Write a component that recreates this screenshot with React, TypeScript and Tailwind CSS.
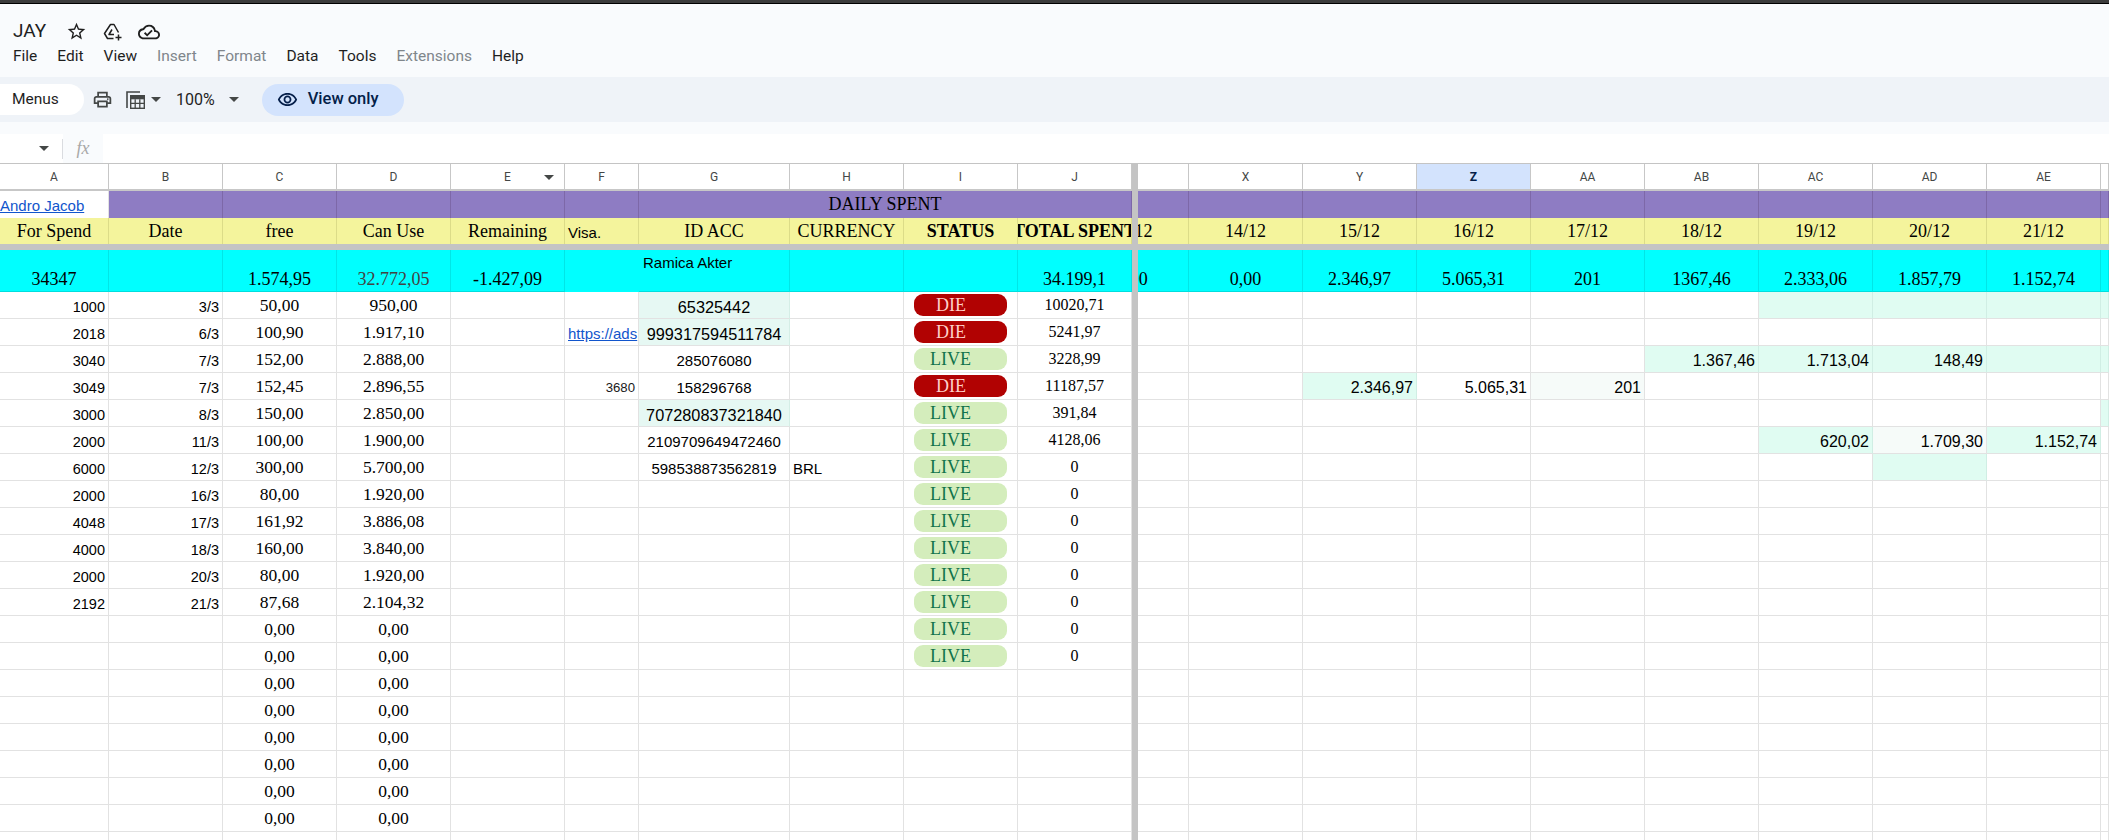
import { MdOutlineCloudDone, MdOutlinePrint, MdOutlineRemoveRedEye, MdOutlineStarBorder } from "react-icons/md"

const GRID =
  "grid grid-cols-[109px_114px_114px_114px_114px_74px_151px_114px_114px_114px_6px_51px_114px_114px_114px_114px_114px_114px_114px_114px_8px]"

const SERIF = "font-['Liberation_Serif',serif]"
const ARIAL = "font-['Liberation_Sans',sans-serif]"

const LEFT_HEADERS = ["A", "B", "C", "D", "E", "F", "G", "H", "I", "J"]
const RIGHT_HEADERS = ["X", "Y", "Z", "AA", "AB", "AC", "AD", "AE", "AF"]
const DATES = ["14/12", "15/12", "16/12", "17/12", "18/12", "19/12", "20/12", "21/12", ""]
const TOTALS = ["0,00", "2.346,97", "5.065,31", "201", "1367,46", "2.333,06", "1.857,79", "1.152,74", ""]

const MENU = [
  { label: "File" },
  { label: "Edit" },
  { label: "View" },
  { label: "Insert", off: true },
  { label: "Format", off: true },
  { label: "Data" },
  { label: "Tools" },
  { label: "Extensions", off: true },
  { label: "Help" },
]

type Row = {
  a?: string
  b?: string
  c?: string
  d?: string
  f?: string
  link?: boolean
  g?: string
  gTint?: boolean
  h?: string
  status?: "DIE" | "LIVE"
  j?: string
  // cells right of the frozen bar, keyed by column index from X
  right?: Record<number, { v?: string; soft?: boolean }>
}

const ROWS: Row[] = [
  { a: "1000", b: "3/3", c: "50,00", d: "950,00", g: "65325442", gTint: true, status: "DIE", j: "10020,71", right: { 5: {}, 6: {}, 7: {}, 8: {} } },
  { a: "2018", b: "6/3", c: "100,90", d: "1.917,10", f: "https://ads", link: true, g: "999317594511784", gTint: true, status: "DIE", j: "5241,97" },
  { a: "3040", b: "7/3", c: "152,00", d: "2.888,00", g: "285076080", status: "LIVE", j: "3228,99", right: { 4: { v: "1.367,46" }, 5: { v: "1.713,04" }, 6: { v: "148,49" }, 7: {}, 8: {} } },
  { a: "3049", b: "7/3", c: "152,45", d: "2.896,55", f: "3680", g: "158296768", status: "DIE", j: "11187,57", right: { 1: { v: "2.346,97" } } },
  { a: "3000", b: "8/3", c: "150,00", d: "2.850,00", g: "707280837321840", gTint: true, status: "LIVE", j: "391,84", right: { 8: {} } },
  { a: "2000", b: "11/3", c: "100,00", d: "1.900,00", g: "2109709649472460", status: "LIVE", j: "4128,06", right: { 5: { v: "620,02" }, 6: { v: "1.709,30", soft: true }, 7: { v: "1.152,74" } } },
  { a: "6000", b: "12/3", c: "300,00", d: "5.700,00", g: "598538873562819", h: "BRL", status: "LIVE", j: "0", right: { 6: {} } },
  { a: "2000", b: "16/3", c: "80,00", d: "1.920,00", status: "LIVE", j: "0" },
  { a: "4048", b: "17/3", c: "161,92", d: "3.886,08", status: "LIVE", j: "0" },
  { a: "4000", b: "18/3", c: "160,00", d: "3.840,00", status: "LIVE", j: "0" },
  { a: "2000", b: "20/3", c: "80,00", d: "1.920,00", status: "LIVE", j: "0" },
  { a: "2192", b: "21/3", c: "87,68", d: "2.104,32", status: "LIVE", j: "0" },
  { c: "0,00", d: "0,00", status: "LIVE", j: "0" },
  { c: "0,00", d: "0,00", status: "LIVE", j: "0" },
  { c: "0,00", d: "0,00" },
  { c: "0,00", d: "0,00" },
  { c: "0,00", d: "0,00" },
  { c: "0,00", d: "0,00" },
  { c: "0,00", d: "0,00" },
  { c: "0,00", d: "0,00" },
  { c: "0,00", d: "0,00" },
]

// row 4 has two more cells with their own fills
const ROW_3049_EXTRA: Record<number, string> = { 2: "5.065,31", 3: "201" }

const CYAN = "border-r-[#00e6e6] border-b border-b-[#00dede] bg-[#00ffff]"
const YELLOW = "border-[#dcdc88] bg-[#f4f49c]"

function Caret({ className = "" }: { className?: string }) {
  return (
    <svg width="10" height="5" viewBox="0 0 10 5" className={className}>
      <path d="M0 0h10L5 5z" fill="#444746" />
    </svg>
  )
}

function CalcIcon() {
  return (
    <svg width="19" height="18" viewBox="0 0 19 18" fill="none">
      <path d="M1 17V1h13" stroke="#444746" strokeWidth="1.6" />
      <rect x="4.7" y="4.7" width="13.6" height="12.6" stroke="#444746" strokeWidth="1.4" />
      <rect x="4.7" y="4.7" width="13.6" height="3.6" fill="#444746" />
      <path d="M4.7 12.4h13.6M9.2 8.3v9M13.8 8.3v9" stroke="#444746" strokeWidth="1.3" />
    </svg>
  )
}

function DriveAddIcon() {
  return (
    <svg width="20" height="18" viewBox="0 0 20 18" fill="none" stroke="#1f1f1f" strokeWidth="1.5" strokeLinejoin="round">
      <path d="M15.5 9.5L11 1.5H7.5L1.5 10.5l3 5h6" />
      <path d="M9 6.5L6 11.5h5" />
      <path d="M15.5 11.5v6M12.5 14.5h6" />
    </svg>
  )
}

function Cell({ className = "", children }: { className?: string; children?: React.ReactNode }) {
  return (
    <div className={`flex min-w-0 overflow-hidden whitespace-nowrap border-r ${className}`}>{children}</div>
  )
}

function ScrolledOut({ className = "", inner = "", text }: { className?: string; inner?: string; text: string }) {
  // column W is scrolled partly behind the frozen bar
  return (
    <div className={`flex overflow-hidden border-r ${className}`}>
      <div className={`ml-[-63px] flex w-[114px] shrink-0 justify-center ${inner}`}>{text}</div>
    </div>
  )
}

function Pill({ status }: { status: "DIE" | "LIVE" }) {
  const die = status === "DIE"
  return (
    <div
      className={`mx-auto mt-[2px] flex h-[22px] w-[93px] items-center rounded-[9px] text-[18px] ${SERIF} ${
        die ? "bg-[#b10202] pl-[22px] text-[#ffcfc9]" : "bg-[#d4edbc] pl-[16px] text-[#11734b]"
      }`}
    >
      {status}
    </div>
  )
}

export default function App() {
  const bar = <div className="bg-[#c4c4c4]" />

  return (
    <div className={`h-[840px] w-[2109px] overflow-hidden bg-white ${ARIAL}`}>
      <div className="h-[4px] bg-[#3c3c3c]">
        <div className="h-[3px]" />
        <div className="h-[1px] bg-black" />
      </div>

      {/* title + menus */}
      <header className="h-[73px] bg-[#f9fbfd] pl-[13px] font-['Roboto',sans-serif] text-[#1f1f1f]">
        <div className="flex h-[43px] items-center pt-[12px]">
          <span className="w-[53px] text-[19px]">JAY</span>
          <MdOutlineStarBorder className="size-[21px]" color="#1f1f1f" />
          <div className="ml-[16px]">
            <DriveAddIcon />
          </div>
          <MdOutlineCloudDone className="ml-[15px] size-[22px]" color="#1f1f1f" />
        </div>
        <nav className="flex h-[20px] items-center gap-[20px] text-[15.5px]">
          {MENU.map((item) => (
            <span key={item.label} className={item.off ? "text-[#80868b]" : ""}>
              {item.label}
            </span>
          ))}
        </nav>
      </header>

      {/* toolbar */}
      <div className="flex h-[45px] items-center bg-[#eff3f8] font-['Roboto',sans-serif] text-[#1f1f1f]">
        <div className="flex h-[31px] w-[84px] items-center rounded-r-full bg-white pl-[12px] text-[15.5px]">Menus</div>
        <MdOutlinePrint className="ml-[8px] size-[21px]" color="#444746" />
        <div className="ml-[13px]">
          <CalcIcon />
        </div>
        <Caret className="ml-[6px]" />
        <span className="ml-[15px] text-[16px]">100%</span>
        <Caret className="ml-[14px]" />
        <div className="ml-[23px] flex h-[32px] w-[142px] items-center rounded-full bg-[#d3e3fd] pl-[15px] text-[16.5px] font-medium text-[#041e49]">
          <MdOutlineRemoveRedEye className="size-[21px]" />
          <span className="ml-[10px]">View only</span>
        </div>
      </div>

      <div className="h-[12px] bg-[#f9fbfd]" />

      {/* formula bar */}
      <div className="flex h-[29px] items-center bg-white">
        <div className="flex w-[62px] items-center">
          <Caret className="ml-[39px]" />
        </div>
        <div className="h-[20px] w-px bg-[#dadce0]" />
        <div className={`flex h-full w-[40px] items-center justify-center bg-[#f9fbfd] text-[18px] italic text-[#a8a8a8] ${SERIF}`}>
          fx
        </div>
      </div>

      {/* column letters */}
      <div className={`${GRID} h-[28px] border-t border-[#c4c4c4] text-[12px] text-[#444746] font-['Roboto',sans-serif]`}>
        {LEFT_HEADERS.map((h) => (
          <div key={h} className="relative flex items-center justify-center border-r border-b-[2px] border-[#c7c7c7]">
            {h}
            {h === "E" && <Caret className="absolute right-[10px] top-[11px]" />}
          </div>
        ))}
        {bar}
        <ScrolledOut className="border-b-[2px] border-[#c7c7c7]" inner="items-center" text="W" />
        {RIGHT_HEADERS.map((h) => (
          <div
            key={h}
            className={`flex items-center justify-center overflow-hidden border-r border-b-[2px] border-[#c7c7c7] ${
              h === "Z" ? "bg-[#d3e3fd] font-bold text-[#041e49]" : ""
            }`}
          >
            {h === "AF" ? "" : h}
          </div>
        ))}
      </div>

      {/* frozen header rows */}
      <div className={`${GRID} h-[27px] text-[18px] text-black ${SERIF}`}>
        <Cell className={`items-end border-b border-[#e2e2e2] pb-[1px] text-[15px] text-[#1155cc] underline ${ARIAL}`}>
          Andro Jacob
        </Cell>
        {[0, 1, 2, 3, 4].map((i) => (
          <div key={i} className="border-r border-b border-[#7d68a8] bg-[#8e7cc3]" />
        ))}
        <div className="col-span-4 flex items-center justify-center border-r border-b border-[#7d68a8] bg-[#8e7cc3]">
          DAILY SPENT
        </div>
        {bar}
        {Array.from({ length: 10 }).map((_, i) => (
          <div key={i} className="border-r border-b border-[#7d68a8] bg-[#8e7cc3]" />
        ))}
      </div>

      <div className={`${GRID} h-[26px] text-[18px] text-black ${SERIF}`}>
        {["For Spend", "Date", "free", "Can Use", "Remaining"].map((t) => (
          <Cell key={t} className={`items-center justify-center ${YELLOW}`}>
            {t}
          </Cell>
        ))}
        <Cell className={`items-end pb-[2px] pl-[3px] text-[15px] leading-[18px] ${YELLOW} ${ARIAL}`}>Visa.</Cell>
        <Cell className={`items-center justify-center ${YELLOW}`}>ID ACC</Cell>
        <Cell className={`items-center justify-center ${YELLOW}`}>CURRENCY</Cell>
        <Cell className={`items-center justify-center font-bold ${YELLOW}`}>STATUS</Cell>
        <Cell className={`items-center justify-center font-bold ${YELLOW}`}>TOTAL SPENT</Cell>
        {bar}
        <ScrolledOut className={YELLOW} inner="items-center" text="13/12" />
        {DATES.map((t, i) => (
          <Cell key={i} className={`items-center justify-center ${YELLOW}`}>
            {t}
          </Cell>
        ))}
      </div>

      <div className="h-[6px] bg-[#c4c4c4]" />

      <div className={`${GRID} h-[42px] text-[18px] leading-[20px] text-black ${SERIF}`}>
        <Cell className={`items-end justify-center pb-[2px] ${CYAN}`}>34347</Cell>
        <Cell className={CYAN} />
        <Cell className={`items-end justify-center pb-[2px] ${CYAN}`}>1.574,95</Cell>
        <Cell className={`items-end justify-center pb-[2px] text-[#434343] ${CYAN}`}>32.772,05</Cell>
        <Cell className={`items-end justify-center pb-[2px] ${CYAN}`}>-1.427,09</Cell>
        <Cell className="border-r-[#00ffff] bg-[#00ffff]" />
        <Cell className={`items-start pl-[4px] pt-[4px] text-[15px] leading-[18px] ${CYAN} ${ARIAL}`}>Ramica Akter</Cell>
        <Cell className={CYAN} />
        <Cell className={CYAN} />
        <Cell className={`items-end justify-center pb-[2px] ${CYAN}`}>34.199,1</Cell>
        {bar}
        <ScrolledOut className={CYAN} inner="items-end pb-[2px]" text="0,00" />
        {TOTALS.map((t, i) => (
          <Cell key={i} className={`items-end justify-center pb-[2px] ${CYAN}`}>
            {t}
          </Cell>
        ))}
      </div>

      {/* body */}
      {ROWS.map((row, r) => (
        <div key={r} className={`${GRID} h-[27px] leading-[18px] text-black`}>
          <Cell className={`items-end justify-end border-[#e2e2e2] border-b pb-[2px] pr-[3px] text-[14.5px] ${ARIAL}`}>{row.a}</Cell>
          <Cell className={`items-end justify-end border-[#e2e2e2] border-b pb-[2px] pr-[3px] text-[14.5px] ${ARIAL}`}>{row.b}</Cell>
          <Cell className={`items-center justify-center border-[#e2e2e2] border-b text-[17.5px] ${SERIF}`}>{row.c}</Cell>
          <Cell className={`items-center justify-center border-[#e2e2e2] border-b text-[17.5px] ${SERIF}`}>{row.d}</Cell>
          <Cell className="border-[#e2e2e2] border-b" />
          <Cell
            className={`items-end border-[#e2e2e2] border-b pb-[2px] ${ARIAL} ${
              row.link ? "pl-[3px] text-[15px] text-[#1155cc] underline" : "justify-end pr-[3px] text-[13.2px] text-[#1a1a1a]"
            }`}
          >
            {row.f}
          </Cell>
          <Cell
            className={`items-end justify-center border-[#e2e2e2] border-b pb-[2px] ${ARIAL} ${
              row.gTint ? "bg-[#e6f8f3] border-r-[#d5eee6] text-[16.3px]" : "text-[15px]"
            }`}
          >
            {row.g}
          </Cell>
          <Cell className={`items-end border-[#e2e2e2] border-b pb-[2px] pl-[3px] text-[15px] ${ARIAL}`}>{row.h}</Cell>
          <Cell className="block border-[#e2e2e2] border-b">{row.status && <Pill status={row.status} />}</Cell>
          <Cell className={`items-center justify-center border-[#e2e2e2] border-b text-[16px] ${SERIF}`}>{row.j}</Cell>
          {bar}
          <Cell className="border-[#e2e2e2] border-b" />
          {RIGHT_HEADERS.map((_, i) => {
            const tinted = row.right?.[i]
            const extra = row.a === "3049" ? ROW_3049_EXTRA[i] : undefined
            const value = tinted?.v ?? extra
            const fill = tinted
              ? tinted.soft
                ? "bg-[#f6fbf9]"
                : "bg-[#e0fcf2] border-r-[#d0eee4]"
              : extra === "201"
                ? "bg-[#f6fbf9]"
                : ""
            return (
              <Cell key={i} className={`items-end justify-end border-[#e2e2e2] border-b pb-[2px] pr-[3px] text-[16px] ${ARIAL} ${fill}`}>
                {value}
              </Cell>
            )
          })}
        </div>
      ))}
    </div>
  )
}
